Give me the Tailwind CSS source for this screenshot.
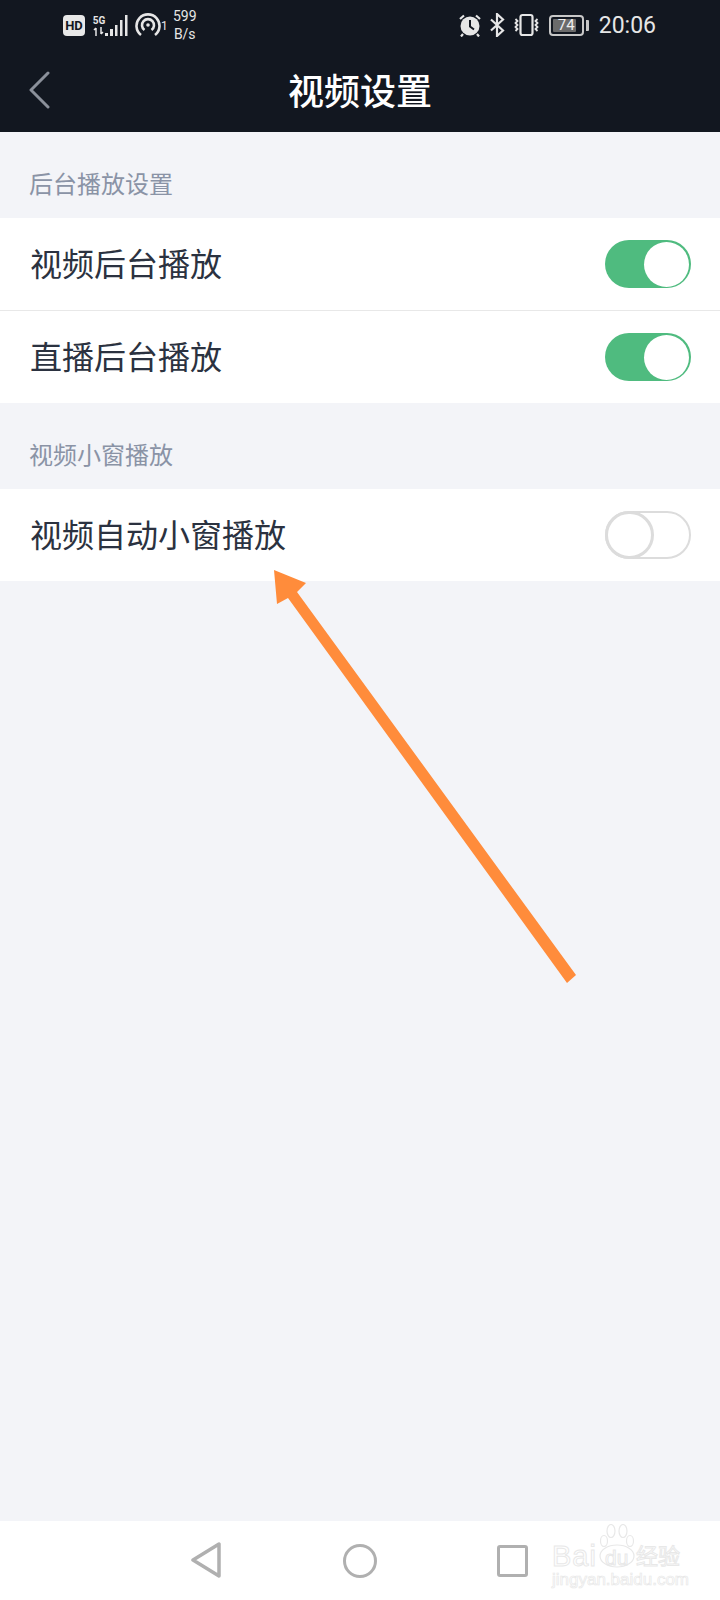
<!DOCTYPE html>
<html lang="zh-CN">
<head>
  <meta charset="UTF-8">
  <meta name="viewport" content="width=device-width, initial-scale=1.0">
  <title>视频设置</title>
  <script src="https://cdn.jsdelivr.net/npm/@tailwindcss/browser@4"></script>
</head>
<body class="bg-[#f3f4f8] [font-family:'Noto_Sans_CJK_SC',sans-serif]">
<div class="relative w-[720px] h-[1600px] flex flex-col overflow-hidden">

  <!-- Header -->
  <header class="h-[132px] bg-[#121720] shrink-0 flex flex-col">
    <!-- Status bar -->
    <div class="h-[50px] pl-[63px] pr-[64px] flex items-center justify-between text-[#e6e6e6] [font-family:Roboto,sans-serif]">
      <div class="flex items-center">
        <div class="w-[22px] h-[21px] bg-[#e8e8e8] rounded-[4px] flex items-center justify-center text-[#121720] text-[13px] font-bold leading-none">HD</div>
        <div class="ml-[8px] w-[12px] flex flex-col items-center">
          <span class="text-[10px] leading-[12px] font-bold">5G</span>
          <svg width="12" height="9" viewBox="0 0 12 9" fill="none" stroke="#e6e6e6" stroke-width="1.5"><path d="M3 1v8M1 3l2-2M8 0v7M10 5L8 7"/></svg>
        </div>
        <svg width="24" height="24" viewBox="0 0 24 24" fill="#e6e6e6"><rect x="0" y="20" width="3" height="3"/><rect x="5" y="16" width="3" height="7"/><rect x="10" y="12" width="2.500" height="11"/><rect x="15" y="7" width="2.500" height="16"/><rect x="20" y="2" width="2.500" height="21"/></svg>
        <svg class="ml-[6px]" width="26" height="24" viewBox="0 0 26 24" fill="none" stroke="#e6e6e6" stroke-width="2.600"><path d="M6 22a11.500 11.500 0 1 1 14 0"/><path d="M9.500 17a6 6 0 1 1 7 0"/><circle cx="13" cy="12" r="1.800" fill="#e6e6e6" stroke="none"/></svg>
        <span class="self-start mt-[12px] text-[12px] leading-none">1</span>
        <div class="ml-[4px] w-[26px] -mt-[1px] flex flex-col items-center text-[14px] leading-[18px]">
          <span>599</span><span>B/s</span>
        </div>
      </div>
      <div class="flex items-center">
        <svg width="24" height="24" viewBox="0 0 24 24"><circle cx="12" cy="13" r="9.500" fill="#e6e6e6"/><path d="M12 7v6.500l4 3" fill="none" stroke="#121720" stroke-width="2"/><path d="M2 6l4-3.500M22 6l-4-3.500M5 21l-2 2.500M19 21l2 2.500" stroke="#e6e6e6" stroke-width="2.200" fill="none"/></svg>
        <svg class="ml-[7px]" width="16" height="24" viewBox="0 0 16 24" fill="none" stroke="#e6e6e6" stroke-width="2.200"><path d="M2 6.500L14 17.500L8 23V1l6 5.500L2 17.500"/></svg>
        <svg class="ml-[8px]" width="27" height="24" viewBox="0 0 27 24" fill="none" stroke="#e6e6e6" stroke-width="1.800"><rect x="7.500" y="2" width="12" height="20" rx="2" stroke-width="2.200"/><path d="M2.500 6l2 2-2 2 2 2-2 2 2 2-2 2M24.500 6l-2 2 2 2-2 2 2 2-2 2 2 2"/></svg>
        <div class="relative ml-[9px] w-[35px] h-[21px] rounded-[4px] border-2 border-[#c8c8c8] p-[2px]">
          <div class="w-[23px] h-full bg-[#6b6b6b] rounded-[1px]"></div>
          <span class="absolute inset-0 flex items-center justify-center text-[15px] leading-none text-[#eeeeee]">74</span>
        </div>
        <div class="ml-[2px] w-[3px] h-[11px] bg-[#c8c8c8] rounded-r-[1px]"></div>
        <span class="ml-[10px] text-[23px] leading-none">20:06</span>
      </div>
    </div>
    <!-- Title bar -->
    <div class="relative flex-1 flex items-center justify-center pb-[4px]">
      <svg class="absolute left-[29px] top-[21px]" width="22" height="38" viewBox="0 0 22 38" fill="none" stroke="#8b909a" stroke-width="3" stroke-linecap="round" stroke-linejoin="round"><path d="M19 2L2 19l17 17"/></svg>
      <h1 class="text-[36px] leading-none font-medium text-white">视频设置</h1>
    </div>
  </header>

  <main class="flex-1 flex flex-col">
    <h2 class="h-[86px] pl-[29px] pt-[16px] flex items-center text-[24px] text-[#8a93a6]">后台播放设置</h2>
    <section class="bg-white">
      <div class="h-[93px] pl-[30px] pr-[29px] flex items-center justify-between border-b border-[#e8e8e8]">
        <span class="-mt-[5px] text-[32px] text-[#2b3240]">视频后台播放</span>
        <div class="w-[86px] h-[48px] pr-[2px] rounded-full bg-[#4fbb7f] flex items-center justify-end">
          <div class="w-[45px] h-[45px] rounded-full bg-white"></div>
        </div>
      </div>
      <div class="h-[92px] pl-[30px] pr-[29px] flex items-center justify-between">
        <span class="-mt-[4px] text-[32px] text-[#2b3240]">直播后台播放</span>
        <div class="w-[86px] h-[48px] pr-[2px] rounded-full bg-[#4fbb7f] flex items-center justify-end">
          <div class="w-[45px] h-[45px] rounded-full bg-white"></div>
        </div>
      </div>
    </section>

    <h2 class="h-[86px] pl-[29px] pt-[16px] flex items-center text-[24px] text-[#8a93a6]">视频小窗播放</h2>
    <section class="bg-white">
      <div class="h-[92px] pl-[30px] pr-[29px] flex items-center justify-between">
        <span class="-mt-[4px] text-[32px] text-[#2b3240]">视频自动小窗播放</span>
        <div class="w-[86px] h-[48px] rounded-full border-2 border-[#dcdcdc] bg-white flex items-center">
          <div class="-ml-[2px] w-[49px] h-[48px] shrink-0 rounded-full border-[3px] border-[#dcdcdc] bg-white"></div>
        </div>
      </div>
    </section>
  </main>

  <!-- Navigation bar -->
  <nav class="h-[79px] shrink-0 bg-white pl-[190px] flex items-center">
    <svg class="mb-[1px]" width="32" height="36" viewBox="0 0 32 36" fill="none" stroke="#b0b0b0" stroke-width="3.500" stroke-linejoin="round"><path d="M29 2v32L3 18z"/></svg>
    <svg class="ml-[121px]" width="34" height="34" viewBox="0 0 34 34" fill="none" stroke="#b0b0b0" stroke-width="3"><circle cx="17" cy="17" r="15.500"/></svg>
    <div class="ml-[120px] w-[31px] h-[32px] rounded-[3px] border-[3.5px] border-[#b0b0b0]"></div>
  </nav>

  <!-- Baidu watermark -->
  <div class="absolute left-[552px] top-[1524px] w-[130px] h-[64px] text-transparent [-webkit-text-stroke:1px_#e8e8e8]">
    <svg class="absolute left-[47px] top-0" width="36" height="44" viewBox="0 0 36 44" fill="none" stroke="#e8e8e8" stroke-width="1.200"><ellipse cx="5" cy="17" rx="3.500" ry="5.500"/><ellipse cx="12" cy="7" rx="4" ry="6.500"/><ellipse cx="24" cy="7" rx="4" ry="6.500"/><ellipse cx="31" cy="17" rx="3.500" ry="5.500"/><ellipse cx="18" cy="32" rx="17" ry="11"/></svg>
    <span class="absolute left-0 top-[17px] text-[29px] leading-[30px] tracking-[1px] [font-family:'Liberation_Sans',sans-serif]">Bai</span>
    <span class="absolute left-[53px] top-[23px] text-[21px] leading-[22px] [font-family:'Liberation_Sans',sans-serif]">du</span>
    <span class="absolute left-[84px] top-[17px] text-[22px] leading-[26px]">经验</span>
    <span class="absolute left-0 top-[47px] text-[17px] leading-[18px] [font-family:'Liberation_Sans',sans-serif] [-webkit-text-stroke:0.7px_#e8e8e8]">jingyan.baidu.com</span>
  </div>

  <!-- Orange annotation arrow -->
  <svg class="absolute left-0 top-0 pointer-events-none" width="720" height="1600" viewBox="0 0 720 1600"><path d="M274 570L306 583 297 592 576 975 567 983 288 598 277 604z" fill="#ff8c3b"/></svg>
</div>
</body>
</html>
